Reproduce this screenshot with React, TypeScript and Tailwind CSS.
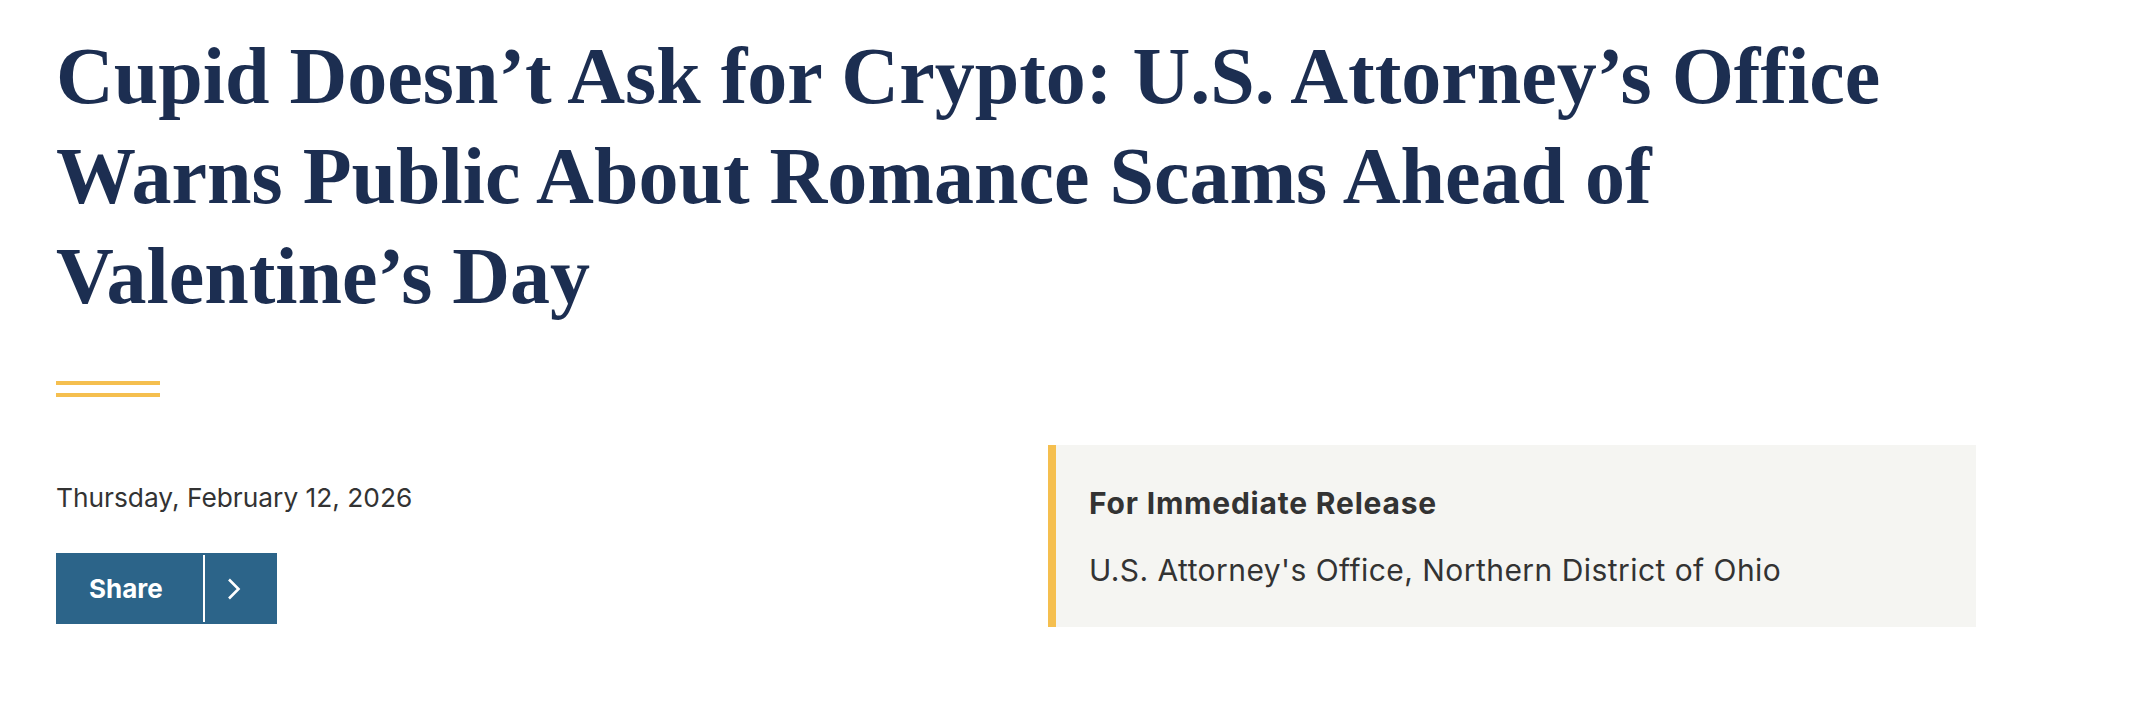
import React from "react";

export default function App() {
  return (
    <div className="w-full h-[714px] bg-white pl-[56px] pr-[172px] pt-[26px]">
      <h1
        className="text-[80px] leading-[100px] font-bold text-[#1c2e51]"
        style={{ fontFamily: '"Liberation Serif", "DejaVu Serif", serif' }}
      >
        Cupid Doesn’t Ask for Crypto: U.S. Attorney’s Office
        <br />
        Warns Public About Romance Scams Ahead of
        <br />
        Valentine’s Day
      </h1>
      <div className="mt-[55px] h-[16px] w-[104px] border-y-4 border-[#f5bf4f]" />
      <div
        className="mt-[48px] grid grid-cols-2 gap-[64px] w-[1920px]"
        style={{ fontFamily: 'Inter, "Liberation Sans", sans-serif' }}
      >
        <div className="pt-[33px]">
          <div className="text-[26.3px] leading-[39px] text-[#333333]">
            Thursday, February 12, 2026
          </div>
          <div className="mt-[36px] flex h-[71px] w-[221px] bg-[#2c6489] text-white">
            <div className="flex w-[147px] items-center pl-[33px] text-[26px] font-bold">
              Share
            </div>
            <div className="my-[2px] w-[2px] bg-white" />
            <div className="flex flex-1 items-center pl-[22px]">
              <svg width="15" height="22" viewBox="0 0 15 22" fill="none">
                <path d="M2 1.5 L11.5 11 L2 20.5" stroke="white" strokeWidth="2.6" />
              </svg>
            </div>
          </div>
        </div>
        <div className="h-[182px] border-l-8 border-[#f5bf4f] bg-[#f5f5f2] pl-[33px] pt-[36px] text-[#333333]">
          <div className="text-[30px] leading-[45px] font-bold tracking-[0.8px]">
            For Immediate Release
          </div>
          <div className="mt-[22px] text-[30px] leading-[45px] tracking-[0.45px]">
            U.S. Attorney's Office, Northern District of Ohio
          </div>
        </div>
      </div>
    </div>
  );
}
